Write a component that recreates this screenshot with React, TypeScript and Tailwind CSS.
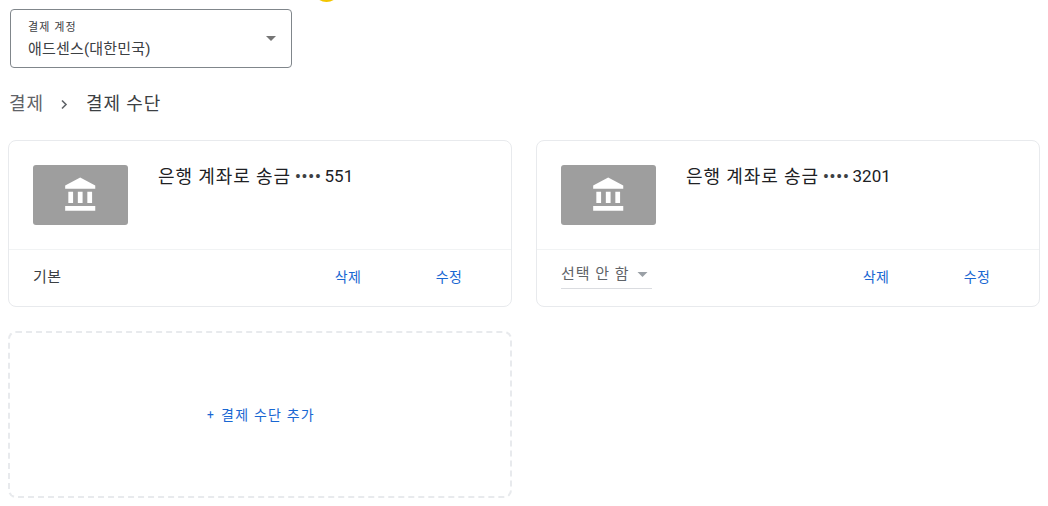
import React from "react";

const font = "font-['Roboto','Noto_Sans_CJK_KR',sans-serif]";

const BankIcon = () => (
	<svg width="38" height="38" viewBox="0 0 24 24" fill="#ffffff" aria-hidden="true">
		<path d="M4 10v7h3v-7H4zm6 0v7h3v-7h-3zM2 22h19v-3H2v3zm14-12v7h3v-7h-3zm-4.5-9L2 6v2h19V6l-9.5-5z" />
	</svg>
);

const Caret = ({ className }: { className: string }) => (
	<svg className={className} viewBox="0 0 10 5" fill="currentColor" aria-hidden="true">
		<path d="M0 0h10L5 5z" />
	</svg>
);

const MethodCard = ({ digits, footer }: { digits: string; footer: React.ReactNode }) => (
	<div className="h-[167px] flex flex-col rounded-lg border border-[#e8eaed] bg-white">
		<div className="h-[109px] flex items-start pt-6 pl-6 border-b border-[#f1f3f4]">
			<div className="w-[95px] h-[60px] flex items-center justify-center rounded-[3px] bg-[#9e9e9e]">
				<BankIcon />
			</div>
			<div className="ml-[30px] flex items-center h-6 text-[#202124]">
				<span className="text-lg tracking-[0.9px]">은행 계좌로 송금</span>
				<span className="ml-[4px] text-base font-bold tracking-[0.9px] text-[#3c4043]">••••</span>
				<span className="ml-[3px] text-[17px]">{digits}</span>
			</div>
		</div>
		<div className="flex-1 flex items-center pl-6 pr-12">
			<div className="flex-1">{footer}</div>
			<a className="w-7 -mt-[3px] text-sm tracking-[0.4px] text-[#1967d2] text-center">삭제</a>
			<a className="w-7 -mt-[3px] ml-[73px] text-sm tracking-[0.4px] text-[#1967d2] text-center">수정</a>
		</div>
	</div>
);

const App = () => {
	return (
		<div className={`relative w-[1048px] h-[506px] overflow-hidden bg-white pl-2 pr-2 ${font}`}>
			<div className="absolute left-[313px] -top-[12px] w-[27px] h-[14px] rounded-b-full bg-[#f2c500]" />

			<div className="pt-[9px] pl-[2px]">
				<div className="w-[282px] h-[59px] flex items-center rounded border border-[#80868b] pl-[17px] pr-[15px]">
					<div className="flex-1">
						<div className="mt-[1px] text-[11px] leading-[14px] tracking-[1.1px] text-[#3c4043]">결제 계정</div>
						<div className="mt-[5px] text-[15px] leading-[18px] tracking-[0.2px] text-[#3c4043]">애드센스(대한민국)</div>
					</div>
					<Caret className="w-[10px] h-[5px] text-[#757575]" />
				</div>
			</div>

			<div className="mt-[23px] h-[26px] flex items-center text-lg">
				<span className="pl-[1px] tracking-[0.9px] text-[#5f6368]">결제</span>
				<svg className="ml-[13px] mr-[15px]" width="14" height="14" viewBox="0 0 14 14" fill="none" stroke="#5f6368" strokeWidth="1.6" aria-hidden="true">
					<path d="M5 3.5 9 7.5 5 11.5" />
				</svg>
				<span className="tracking-[0.9px] text-[#3c4043]">결제 수단</span>
			</div>

			<div className="mt-[23px] grid grid-cols-2 gap-x-6 gap-y-[24px] w-[1032px]">
				<MethodCard digits="551" footer={<div className="-mt-[2px] text-[15px] tracking-[0.4px] text-[#3c4043]">기본</div>} />
				<MethodCard
					digits="3201"
					footer={
						<div className="w-[91px] h-[28px] -mt-[6px] flex items-center border-b border-[#dadce0]">
							<span className="text-[15px] tracking-[1px] text-[#5f6368]">선택 안 함</span>
							<Caret className="ml-[7px] w-[11px] h-[5px] text-[#9aa0a6]" />
						</div>
					}
				/>
				<div className="h-[167px] flex items-center justify-center rounded-lg border-2 border-dashed border-[#e8eaed]">
					<span className="ml-[2px] flex items-center text-sm tracking-[1.2px] text-[#1967d2]">
						<span className="mr-[6px] text-xs">+</span>
						결제 수단 추가
					</span>
				</div>
			</div>
		</div>
	);
};

export default App;
